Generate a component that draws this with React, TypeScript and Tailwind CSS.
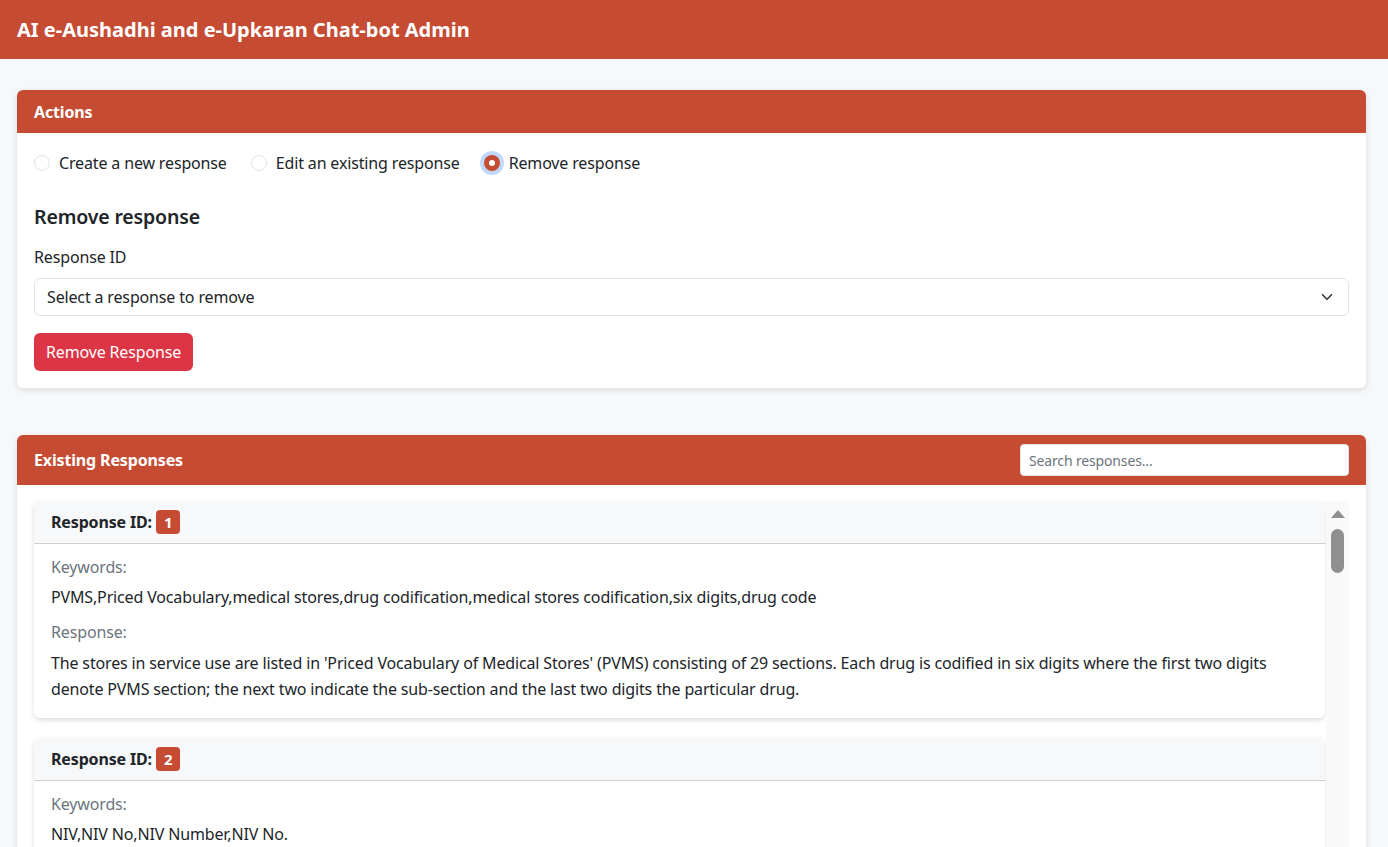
import { ChevronDown } from "lucide-react";

const responses = [
  {
    id: 1,
    keywords:
      "PVMS,Priced Vocabulary,medical stores,drug codification,medical stores codification,six digits,drug code",
    response:
      "The stores in service use are listed in 'Priced Vocabulary of Medical Stores' (PVMS) consisting of 29 sections. Each drug is codified in six digits where the first two digits denote PVMS section; the next two indicate the sub-section and the last two digits the particular drug.",
  },
  {
    id: 2,
    keywords: "NIV,NIV No,NIV Number,NIV No.",
    response:
      "NIV stands for Not In Vocabulary. Items which are not listed in PVMS are allotted an NIV number for identification.",
  },
];

function Radio({ label, checked }: { label: string; checked?: boolean }) {
  return (
    <label className="flex items-center gap-[9px]">
      {checked ? (
        <span className="flex h-4 w-4 items-center justify-center rounded-full bg-[#c54b32] ring-4 ring-[#c2d9fb]">
          <span className="h-[6px] w-[6px] rounded-full bg-white" />
        </span>
      ) : (
        <span className="h-4 w-4 rounded-full border border-[#dee2e6] bg-white" />
      )}
      <span>{label}</span>
    </label>
  );
}

export default function App() {
  return (
    <div
      className="min-h-screen bg-[#f7f8fa] text-[#212529] text-base tracking-[-0.15px]"
      style={{ fontFamily: '"Segoe UI", "Noto Sans", sans-serif' }}
    >
      <header className="flex h-[59px] items-center bg-[#c54b32] px-[17px]">
        <h1 className="text-[20px] font-bold tracking-normal text-white">AI e-Aushadhi and e-Upkaran Chat-bot Admin</h1>
      </header>

      <main className="pl-[17px] pr-[22px] pt-[31px]">
        {/* Actions */}
        <section className="overflow-hidden rounded-md bg-white shadow-[0_2px_6px_rgba(0,0,0,0.12)]">
          <div className="flex h-[43px] items-center bg-[#c54b32] px-[17px] font-bold text-white">Actions</div>
          <div className="px-[17px] pb-[17px] pt-[18px]">
            <div className="flex items-center gap-6">
              <Radio label="Create a new response" />
              <Radio label="Edit an existing response" />
              <Radio label="Remove response" checked />
            </div>
            <h2 className="mt-[30px] text-[19.5px] font-semibold leading-6">Remove response</h2>
            <div className="mt-[16px]">Response ID</div>
            <div className="mt-[9px] flex h-[38px] items-center justify-between rounded-md border border-[#dee2e6] px-3">
              <span>Select a response to remove</span>
              <ChevronDown size={18} strokeWidth={2.2} className="text-[#343a40]" />
            </div>
            <button className="mt-[17px] h-[38px] rounded-md bg-[#dc3545] px-3 text-white">Remove Response</button>
          </div>
        </section>

        {/* Existing */}
        <section className="mt-[47px] overflow-hidden rounded-md bg-white shadow-[0_2px_6px_rgba(0,0,0,0.12)]">
          <div className="flex h-[50px] items-center justify-between bg-[#c54b32] pl-[17px] pr-[17px]">
            <span className="font-bold text-white">Existing Responses</span>
            <input
              placeholder="Search responses..."
              className="h-[32px] w-[329px] rounded border border-[#dee2e6] bg-white px-2 text-sm placeholder:text-[#6c757d] outline-none"
            />
          </div>
          <div className="flex gap-0 px-[17px] pt-[16px]">
            <div className="flex flex-1 flex-col gap-5">
              {responses.map((r) => (
                <div key={r.id} className="rounded-md bg-white shadow-[0_2px_5px_rgba(0,0,0,0.14)]">
                  <div className="flex h-[43px] items-center gap-1 rounded-t-md border-b border-[#cfcfcf] bg-[#f7f8fa] px-[17px]">
                    <span className="font-bold">Response ID:</span>
                    <span className="rounded bg-[#c54b32] px-[8px] py-[1px] text-[15px] font-bold text-white">{r.id}</span>
                  </div>
                  <div className="px-[17px] pb-[16px] pt-[11px] leading-6">
                    <div className="text-[#6c757d]">Keywords:</div>
                    <div className="mt-[6px]">{r.keywords}</div>
                    <div className="mt-[11px] text-[#6c757d]">Response:</div>
                    <div className="mt-[6px] leading-[26px]">{r.response}</div>
                  </div>
                </div>
              ))}
            </div>
            <div className="ml-[1px] flex w-[23px] flex-col items-center bg-[#f9f9f9] pt-[8px]">
              <svg width="16" height="10" viewBox="0 0 16 10">
                <path d="M8 1 L15 9 L1 9 Z" fill="#8f8f8f" />
              </svg>
              <div className="mt-[10px] h-[44px] w-[13px] rounded-full bg-[#8f8f8f]" />
              <div className="h-[400px]" />
            </div>
          </div>
        </section>
      </main>
    </div>
  );
}
